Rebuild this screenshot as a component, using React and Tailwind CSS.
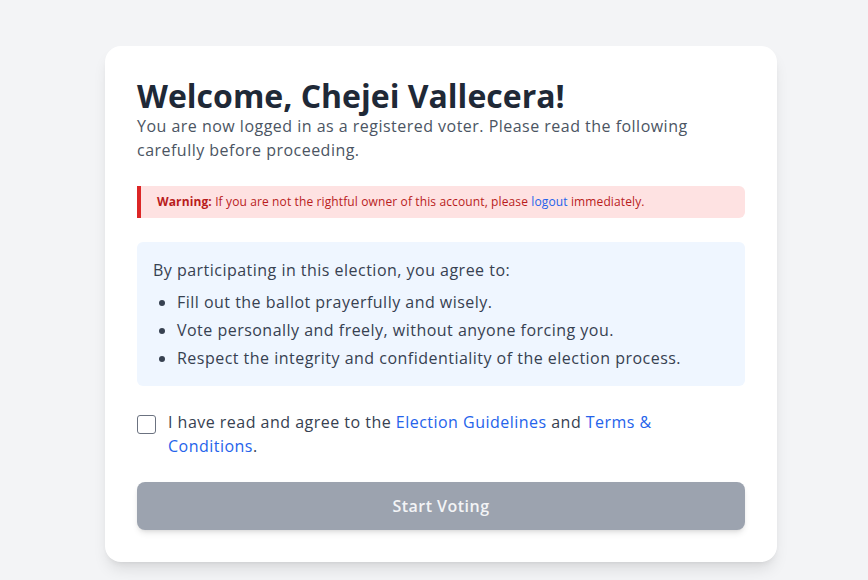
export default function App() {
  return (
    <div className="min-h-[580px] bg-[#f3f4f6] pt-[46px] pl-[105px] tracking-[0.03em]" style={{ fontFamily: '"Open Sans", sans-serif' }}>
      <div className="w-[672px] rounded-2xl bg-white p-8 shadow-lg">
        <h1 className="text-[32px] leading-9 font-bold tracking-normal text-[#1f2937]">Welcome, Chejei Vallecera!</h1>
        <p className="text-base leading-6 text-[#4b5563]">
          You are now logged in as a registered voter. Please read the following carefully before proceeding.
        </p>

        <div className="mt-6 rounded-r-md border-l-4 border-[#dc2626] bg-[#fee2e2] py-2 pl-4 pr-4 text-xs leading-4 tracking-[0.01em] text-[#b91c1c]">
          <span className="font-bold">Warning:</span> If you are not the rightful owner of this account, please{" "}
          <a className="text-[#2563eb]">logout</a> immediately.
        </div>

        <div className="mt-6 rounded-md bg-[#eff6ff] p-4 text-base leading-6 text-[#374151]">
          <p className="mb-2">By participating in this election, you agree to:</p>
          <ul className="list-disc space-y-1 pl-6">
            <li>Fill out the ballot prayerfully and wisely.</li>
            <li>Vote personally and freely, without anyone forcing you.</li>
            <li>Respect the integrity and confidentiality of the election process.</li>
          </ul>
        </div>

        <div className="mt-6 flex items-start gap-3">
          <span className="mt-[5px] block h-[19px] w-[19px] shrink-0 rounded-[3px] border border-[#6b7280] bg-white"></span>
          <p className="text-base leading-6 text-[#374151]">
            I have read and agree to the <a className="text-[#2563eb]">Election Guidelines</a> and{" "}
            <a className="text-[#2563eb]">Terms &amp; Conditions</a>.
          </p>
        </div>

        <button className="mt-6 flex h-12 w-full items-center justify-center rounded-lg bg-[#9ca3af] text-base font-semibold text-[#f3f4f6] shadow-md">
          Start Voting
        </button>
      </div>
    </div>
  );
}
